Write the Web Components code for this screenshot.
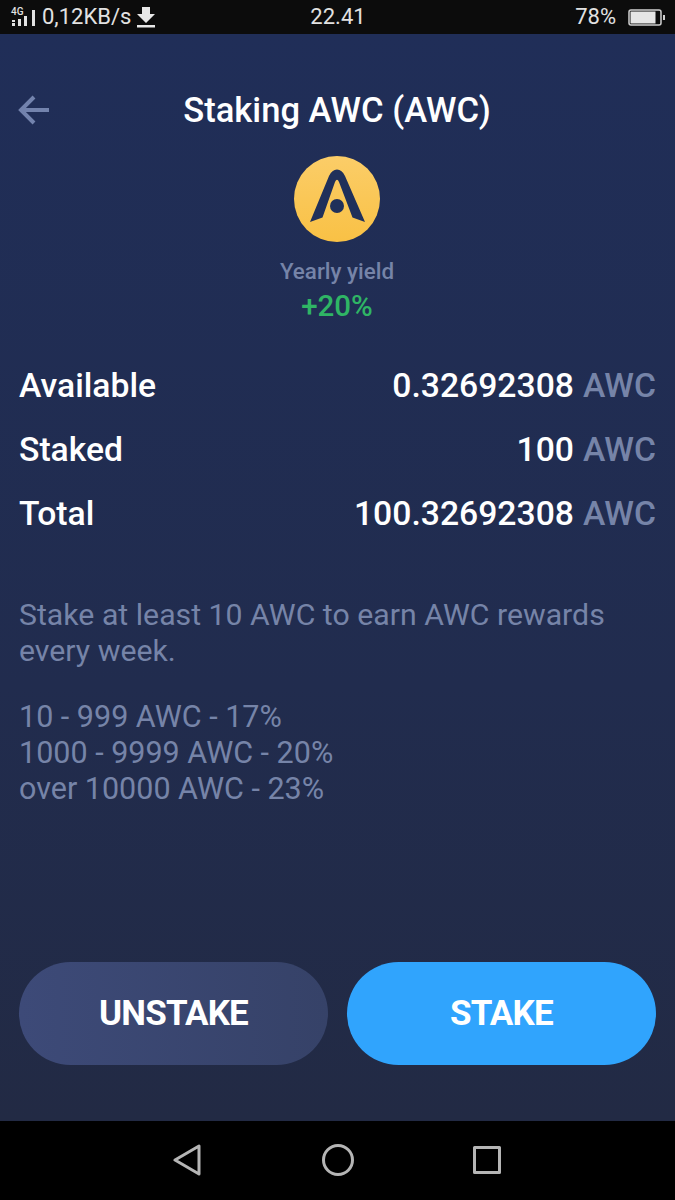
<!DOCTYPE html>
<html lang="en">
<head>
<meta charset="utf-8">
<title>Staking AWC</title>
<style>
  html, body { margin: 0; padding: 0; background: #000; }
  body { font-family: Roboto, "Liberation Sans", sans-serif; }
</style>
</head>
<body>
<staking-screen></staking-screen>

<script>
class StatusBar extends HTMLElement {
  constructor() {
    super()
    this.attachShadow({ mode: "open" }).innerHTML = `
      <style>
        :host { display: grid; grid-template-columns: 1fr auto 1fr; align-items: center; height: 34px; background: #0c0c0c; color: #e2e2e2; font-size: 22px; line-height: 34px; padding: 0 10px 0 11px; box-sizing: border-box; }
        .left, .right { display: flex; align-items: center; }
        .right { justify-content: flex-end; }
        .net { position: relative; width: 26px; height: 20px; margin-right: 5px; }
        .net small { position: absolute; left: 0; top: 0; font-size: 10px; line-height: 10px; font-weight: 500; }
        svg { display: block; }
        .dl { margin-left: 5px; }
        .bat { margin-left: 12px; }
      </style>
      <div class="left">
        <div class="net">
          <small>4G</small>
          <svg width="26" height="20" viewBox="0 0 26 20" fill="#e2e2e2">
            <rect x="1" y="13" width="3" height="2"/><rect x="1" y="16" width="3" height="3"/>
            <rect x="7" y="12" width="3" height="7"/><rect x="13" y="9" width="3" height="10"/>
            <rect x="21" y="3" width="3" height="16"/>
          </svg>
        </div>
        <span>0,12KB/s</span>
        <svg class="dl" width="20" height="22" viewBox="0 0 20 22" fill="#e8e8e8">
          <path d="M6 1h8v7h5l-9 9-9-9h5z"/><rect x="1" y="19" width="18" height="2.5"/>
        </svg>
      </div>
      <span>22.41</span>
      <div class="right">
        <span>78%</span>
        <svg class="bat" width="37" height="17" viewBox="0 0 37 17">
          <rect x="1" y="1" width="32" height="15" rx="2" fill="none" stroke="#cfcfcf" stroke-width="1.500"/>
          <rect x="2.500" y="2.500" width="25" height="12" fill="#e6e6e6"/>
          <rect x="35" y="6" width="2" height="5" fill="#cfcfcf"/>
        </svg>
      </div>`
  }
}

class AppHeader extends HTMLElement {
  constructor() {
    super()
    this.attachShadow({ mode: "open" }).innerHTML = `
      <style>
        :host { display: grid; grid-template-columns: 1fr auto 1fr; align-items: center; height: 40px; color: #fff; }
        .title { font-size: 34.600px; font-weight: 500; line-height: 40px; white-space: nowrap; }
        svg { display: block; }
      </style>
      <svg width="31" height="30" viewBox="0 0 31 30" fill="none" stroke="#7383ad" stroke-width="4">
        <path d="M31 15H4M16 2 3 15 16 28"/>
      </svg>
      <div class="title"><slot></slot></div>
      <span></span>`
  }
}

class YieldBadge extends HTMLElement {
  constructor() {
    super()
    this.attachShadow({ mode: "open" }).innerHTML = `
      <style>
        :host { display: flex; flex-direction: column; align-items: center; }
        svg { display: block; }
        .label { margin-top: 17px; font-size: 22.400px; line-height: 24px; font-weight: 500; color: #7684a8; }
        .value { margin-top: 7px; font-size: 29.500px; line-height: 32px; font-weight: 500; color: #2fb565; }
      </style>
      <svg width="86" height="86" viewBox="0 0 86 86">
        <defs>
          <linearGradient id="coin" x1="0" y1="0" x2="0" y2="1">
            <stop offset="0" stop-color="#fbcd68"/><stop offset="1" stop-color="#f9c145"/>
          </linearGradient>
        </defs>
        <circle cx="43" cy="43" r="43" fill="url(#coin)"/>
        <path d="M16 66 35 20Q38 13.500 43 13.500T51 20L71 66 58.500 61.500 45 26Q43 21.500 41 26L28.500 61.500Z" fill="#20305a"/>
        <circle cx="43" cy="50" r="7" fill="#20305a"/>
      </svg>
      <div class="label"><slot name="label"></slot></div>
      <div class="value"><slot name="value"></slot></div>`
  }
}

class BalanceRow extends HTMLElement {
  constructor() {
    super()
    this.attachShadow({ mode: "open" }).innerHTML = `
      <style>
        :host { display: flex; justify-content: space-between; align-items: center; height: 64px; font-size: 33.700px; font-weight: 500; color: #fff; }
        .unit { color: #7684a8; margin-left: 9px; }
      </style>
      <span><slot name="label"></slot></span>
      <span><slot name="value"></slot><span class="unit">AWC</span></span>`
  }
}

class PillButton extends HTMLElement {
  constructor() {
    super()
    this.attachShadow({ mode: "open" }).innerHTML = `
      <style>
        :host { display: flex; align-items: center; justify-content: center; height: 103px; border-radius: 52px; background: linear-gradient(90deg, #3d4a78, #364268); color: #fff; font-size: 35px; letter-spacing: -0.800px; font-weight: 700; }
        :host([primary]) { background: #30a4fd; }
      </style>
      <slot></slot>`
  }
}

class NavBar extends HTMLElement {
  constructor() {
    super()
    this.attachShadow({ mode: "open" }).innerHTML = `
      <style>
        :host { display: flex; justify-content: center; align-items: center; gap: 121px; height: 79px; background: #000; box-sizing: border-box; padding: 0 2px 2px 0; }
        svg { display: block; }
        .square { margin-left: -2px; }
      </style>
      <svg width="28" height="32" viewBox="0 0 28 32" fill="none" stroke="#b5b5b5" stroke-width="3" stroke-linejoin="round">
        <path d="M26 2V30L2 16Z"/>
      </svg>
      <svg width="32" height="32" viewBox="0 0 32 32" fill="none" stroke="#b5b5b5" stroke-width="3">
        <circle cx="16" cy="16" r="14.500"/>
      </svg>
      <svg class="square" width="28" height="28" viewBox="0 0 28 28" fill="none" stroke="#b5b5b5" stroke-width="3" stroke-linejoin="round">
        <rect x="1.500" y="1.500" width="25" height="25"/>
      </svg>`
  }
}

class StakingScreen extends HTMLElement {
  constructor() {
    super()
    this.attachShadow({ mode: "open" }).innerHTML = `
      <style>
        :host { display: flex; flex-direction: column; width: 675px; height: 1200px; overflow: hidden; font-family: Roboto, "Liberation Sans", sans-serif; }
        main { flex: 1; display: flex; flex-direction: column; padding: 56px 19px 56px 18px; background: linear-gradient(180deg, #202e58 0%, #212c4e 60%, #222a44 100%); }
        yield-badge { margin-top: 26px; }
        .rows { margin-top: 31px; padding-left: 1px; }
        .note { margin: 52px 0 0 1px; font-size: 30.250px; line-height: 36px; color: #7684a8; }
        .tiers { margin-top: 30px; font-size: 30.500px; }
        .actions { margin-top: auto; display: grid; grid-template-columns: 1fr 1fr; gap: 19px; padding-left: 1px; }
      </style>
      <status-bar></status-bar>
      <main>
        <app-header>Staking AWC (AWC)</app-header>
        <yield-badge>
          <span slot="label">Yearly yield</span>
          <span slot="value">+20%</span>
        </yield-badge>
        <div class="rows">
          <balance-row><span slot="label">Available</span><span slot="value">0.32692308</span></balance-row>
          <balance-row><span slot="label">Staked</span><span slot="value">100</span></balance-row>
          <balance-row><span slot="label">Total</span><span slot="value">100.32692308</span></balance-row>
        </div>
        <div class="note">Stake at least 10 AWC to earn AWC rewards<br>every week.</div>
        <div class="note tiers">10 - 999 AWC - 17%<br>1000 - 9999 AWC - 20%<br>over 10000 AWC - 23%</div>
        <div class="actions">
          <pill-button>UNSTAKE</pill-button>
          <pill-button primary>STAKE</pill-button>
        </div>
      </main>
      <nav-bar></nav-bar>`
  }
}

customElements.define("status-bar", StatusBar)
customElements.define("app-header", AppHeader)
customElements.define("yield-badge", YieldBadge)
customElements.define("balance-row", BalanceRow)
customElements.define("pill-button", PillButton)
customElements.define("nav-bar", NavBar)
customElements.define("staking-screen", StakingScreen)
</script>
</body>
</html>
